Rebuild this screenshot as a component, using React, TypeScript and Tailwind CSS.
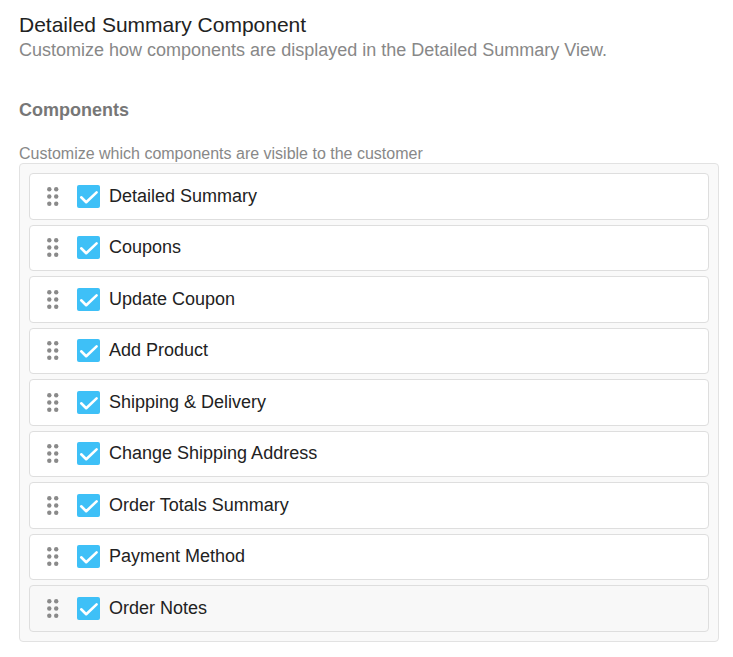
import React from 'react';

const items = [
  'Detailed Summary',
  'Coupons',
  'Update Coupon',
  'Add Product',
  'Shipping & Delivery',
  'Change Shipping Address',
  'Order Totals Summary',
  'Payment Method',
  'Order Notes',
];

const DragHandle: React.FC = () => (
  <svg width="12" height="19" viewBox="0 0 12 19" className="shrink-0 text-[#8a8a8a]">
    {[2.3, 9.5, 16.7].map((cy) =>
      [2.3, 9.2].map((cx) => <circle key={`${cx}-${cy}`} cx={cx} cy={cy} r="2.2" fill="currentColor" />)
    )}
  </svg>
);

const CheckBox: React.FC = () => (
  <div className="w-[23px] h-[23px] rounded-[2px] bg-[#3ec0f7] shrink-0">
    <svg width="23" height="23" viewBox="0 0 23 23" fill="none">
      <path d="M4.2 12.3 L9.2 17.2 L19.6 7.4" stroke="white" strokeWidth="2.6" strokeLinecap="round" strokeLinejoin="round" />
    </svg>
  </div>
);

export default function App() {
  return (
    <div className="min-h-screen bg-white pt-[13px] pl-[19px] pr-[14px] font-['Liberation_Sans',Arial,sans-serif]">
      {/* Header */}
      <h1 className="text-[21px] leading-[24px] text-[#222]">Detailed Summary Component</h1>
      <p className="mt-[2px] text-[18px] leading-[22px] text-[#888]">
        Customize how components are displayed in the Detailed Summary View.
      </p>

      {/* Components section */}
      <h2 className="mt-[38px] text-[18px] leading-[22px] font-bold text-[#777]">Components</h2>
      <p className="mt-[23px] text-[16px] leading-[19px] text-[#888]">
        Customize which components are visible to the customer
      </p>

      <div className="w-[700px] bg-[#f9f9f9] border border-[#e2e2e2] rounded-[4px] p-[9px] flex flex-col gap-[5px]">
        {items.map((label, i) => (
          <div
            key={label}
            className={`h-[46.5px] flex items-center border border-[#dedede] rounded-[4px] pl-[17px] ${
              i === items.length - 1 ? 'bg-[#f8f8f8]' : 'bg-white'
            }`}
          >
            <DragHandle />
            <div className="ml-[18px]">
              <CheckBox />
            </div>
            <span className="ml-[9px] text-[18px] text-[#222]">{label}</span>
          </div>
        ))}
      </div>
    </div>
  );
}
